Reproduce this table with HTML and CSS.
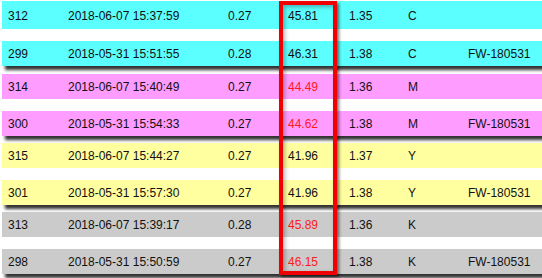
FILE: index.html
```html
<!DOCTYPE html>
<html>
<head>
<meta charset="utf-8">
<link rel="stylesheet" href="styles.css">
</head>
<body>
<div class="sheet">
  <div class="group first cyan">
    <div class="row"><span>312</span><span>2018-06-07 15:37:59</span><span>0.27</span><span>45.81</span><span>1.35</span><span>C</span><span></span></div>
    <div class="row"><span>299</span><span>2018-05-31 15:51:55</span><span>0.28</span><span>46.31</span><span>1.38</span><span>C</span><span>FW-180531</span></div>
  </div>
  <div class="group pink">
    <div class="row"><span>314</span><span>2018-06-07 15:40:49</span><span>0.27</span><span class="red">44.49</span><span>1.36</span><span>M</span><span></span></div>
    <div class="row"><span>300</span><span>2018-05-31 15:54:33</span><span>0.27</span><span class="red">44.62</span><span>1.38</span><span>M</span><span>FW-180531</span></div>
  </div>
  <div class="group yellow">
    <div class="row"><span>315</span><span>2018-06-07 15:44:27</span><span>0.27</span><span>41.96</span><span>1.37</span><span>Y</span><span></span></div>
    <div class="row"><span>301</span><span>2018-05-31 15:57:30</span><span>0.27</span><span>41.96</span><span>1.38</span><span>Y</span><span>FW-180531</span></div>
  </div>
  <div class="group gray">
    <div class="row"><span>313</span><span>2018-06-07 15:39:17</span><span>0.28</span><span class="red">45.89</span><span>1.36</span><span>K</span><span></span></div>
    <div class="row"><span>298</span><span>2018-05-31 15:50:59</span><span>0.27</span><span class="red">46.15</span><span>1.38</span><span>K</span><span>FW-180531</span></div>
  </div>
  <div class="highlight"></div>
</div>
</body>
</html>
```

FILE: styles.css
```css
html, body {
  margin: 0;
  padding: 0;
  background: #ffffff;
}
body {
  width: 542px;
  height: 278px;
  overflow: hidden;
  font-family: "Liberation Sans", Arial, sans-serif;
  font-size: 12px;
  color: #111111;
}
.sheet {
  position: relative;
  padding-top: 1px;
  padding-left: 2px;
  display: flex;
  flex-direction: column;
  gap: 7px;
}
.group {
  display: flex;
  flex-direction: column;
  gap: 12px;
  background: #ffffff;
  box-shadow: 3px 4px 3px rgba(0, 0, 0, 0.8);
}
.group.first {
  margin-bottom: 1px;
}
.row {
  height: 25px;
  display: grid;
  grid-template-columns: 60px 160px 60px 61px 59px 60px 1fr;
  align-items: center;
  padding-left: 6px;
}
.group.first .row:first-child {
  height: 28px;
  padding-top: 2px;
  box-sizing: border-box;
}
.cyan .row { background: #5cffff; }
.pink .row { background: #ff9cff; }
.yellow .row { background: #ffffa0; }
.gray .row { background: #cbcbcb; }
.red { color: #ff1a1a; }
.highlight {
  position: absolute;
  left: 279px;
  top: 1px;
  width: 50px;
  height: 266px;
  border: 4px solid #f00000;
  box-shadow: 2px 2px 3px rgba(0, 0, 0, 0.55), inset 2px 2px 4px rgba(0, 0, 0, 0.3);
}
```
